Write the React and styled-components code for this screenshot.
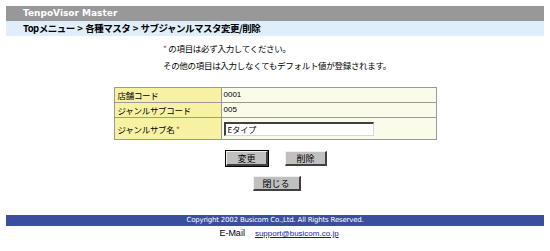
import React from "react";
import styled, { createGlobalStyle } from "styled-components";

const Global = createGlobalStyle`
  body {
    margin: 6px 6px 0;
    background: #ffffff;
    font-family: "Noto Sans CJK JP", "Liberation Sans", sans-serif;
    font-size: 11px;
    color: #000;
  }
`;

const TitleBar = styled.div`
  height: 15px;
  background: #989898;
  color: #fff;
  font-family: "DejaVu Sans", "Liberation Sans", sans-serif;
  font-weight: bold;
  font-size: 9px;
  line-height: 15px;
  padding-left: 17px;
`;

const Crumbs = styled.div`
  height: 15px;
  background: #dfeefa;
  font-weight: bold;
  font-size: 9.5px;
  line-height: 15px;
  padding-left: 17px;
  letter-spacing: -0.5px;
  word-spacing: 1px;
`;

const Notes = styled.div`
  display: flex;
  justify-content: center;
  padding: 4px 0 0 4px;
`;

const NoteText = styled.div`
  font-size: 8.5px;
  letter-spacing: -0.3px;
  line-height: 17px;
`;

const Star = styled.span`
  color: #e23a6a;
`;

const Table = styled.table`
  margin: 13px auto 0;
  width: 323px;
  border-collapse: collapse;
  border: 1px solid #9a9a9a;
`;

const Label = styled.td`
  width: 100px;
  background: #f7f2a2;
  border: 1px solid #9a9a9a;
  padding: 0 3px;
  height: ${(p) => (p.$tall ? "21px" : "14px")};
  font-size: 8.5px;
  letter-spacing: -0.3px;
  line-height: 12px;
`;

const Value = styled.td`
  background: #fbfbea;
  border: 1px solid #9a9a9a;
  padding: 0 2px;
  font-family: "Liberation Sans", sans-serif;
  font-size: 8px;
  line-height: 12px;
`;

const TextInput = styled.input`
  display: block;
  box-sizing: border-box;
  width: 150px;
  height: 14px;
  border-style: solid;
  border-width: 2px 1px 1px 2px;
  border-color: #404040 #d8d8d8 #d8d8d8 #404040;
  background: #fff;
  padding: 0 2px;
  font-family: "Noto Sans CJK JP", sans-serif;
  font-size: 8px;
  outline: none;
`;

const ButtonRow = styled.div`
  display: flex;
  justify-content: center;
  gap: 17px;
  margin-top: ${(p) => p.$top}px;
  padding-left: 3px;
`;

const Btn = styled.button`
  box-sizing: border-box;
  width: ${(p) => p.$w}px;
  height: 15px;
  padding: 0;
  background: #c0c0c0;
  font-family: "Noto Sans CJK JP", sans-serif;
  font-size: 9px;
  line-height: 11px;
  color: #000;
  border-style: solid;
  border-width: 1px 2px 2px 1px;
  border-color: #f0f0f0 #404040 #404040 #f0f0f0;
  outline: ${(p) => (p.$def ? "1px solid #000" : "none")};
`;

const FooterBar = styled.div`
  margin-top: 24px;
  height: 11px;
  background: #3a4d9e;
  color: #fff;
  text-align: center;
  font-family: "DejaVu Sans", sans-serif;
  font-size: 7px;
  letter-spacing: -0.2px;
  line-height: 11px;
`;

const Mail = styled.div`
  display: flex;
  justify-content: center;
  gap: 10px;
  padding: 1px 0 0 8px;
  font-family: "Liberation Sans", sans-serif;
  font-size: 9px;
  line-height: 13px;
`;

const MailLink = styled.a`
  color: #1a1aa0;
  text-decoration: underline;
  font-size: 8px;
`;

export default function App() {
  return (
    <>
      <Global />
      <TitleBar>TenpoVisor Master</TitleBar>
      <Crumbs>Topメニュー &gt; 各種マスタ &gt; サブジャンルマスタ変更/削除</Crumbs>
      <Notes>
        <NoteText>
          <Star>*</Star> の項目は必ず入力してください。
          <br />
          その他の項目は入力しなくてもデフォルト値が登録されます。
        </NoteText>
      </Notes>
      <Table>
        <tbody>
          <tr>
            <Label>店舗コード</Label>
            <Value>0001</Value>
          </tr>
          <tr>
            <Label>ジャンルサブコード</Label>
            <Value>005</Value>
          </tr>
          <tr>
            <Label $tall>
              ジャンルサブ名 <Star>*</Star>
            </Label>
            <Value>
              <TextInput defaultValue="Eタイプ" />
            </Value>
          </tr>
        </tbody>
      </Table>
      <ButtonRow $top={11}>
        <Btn $w={42} $def>変更</Btn>
        <Btn $w={42}>削除</Btn>
      </ButtonRow>
      <ButtonRow $top={10}>
        <Btn $w={48}>閉じる</Btn>
      </ButtonRow>
      <FooterBar>Copyright 2002 Busicom Co.,Ltd. All Rights Reserved.</FooterBar>
      <Mail>
        <span>E-Mail</span>
        <MailLink href="#">support@busicom.co.jp</MailLink>
      </Mail>
    </>
  );
}
